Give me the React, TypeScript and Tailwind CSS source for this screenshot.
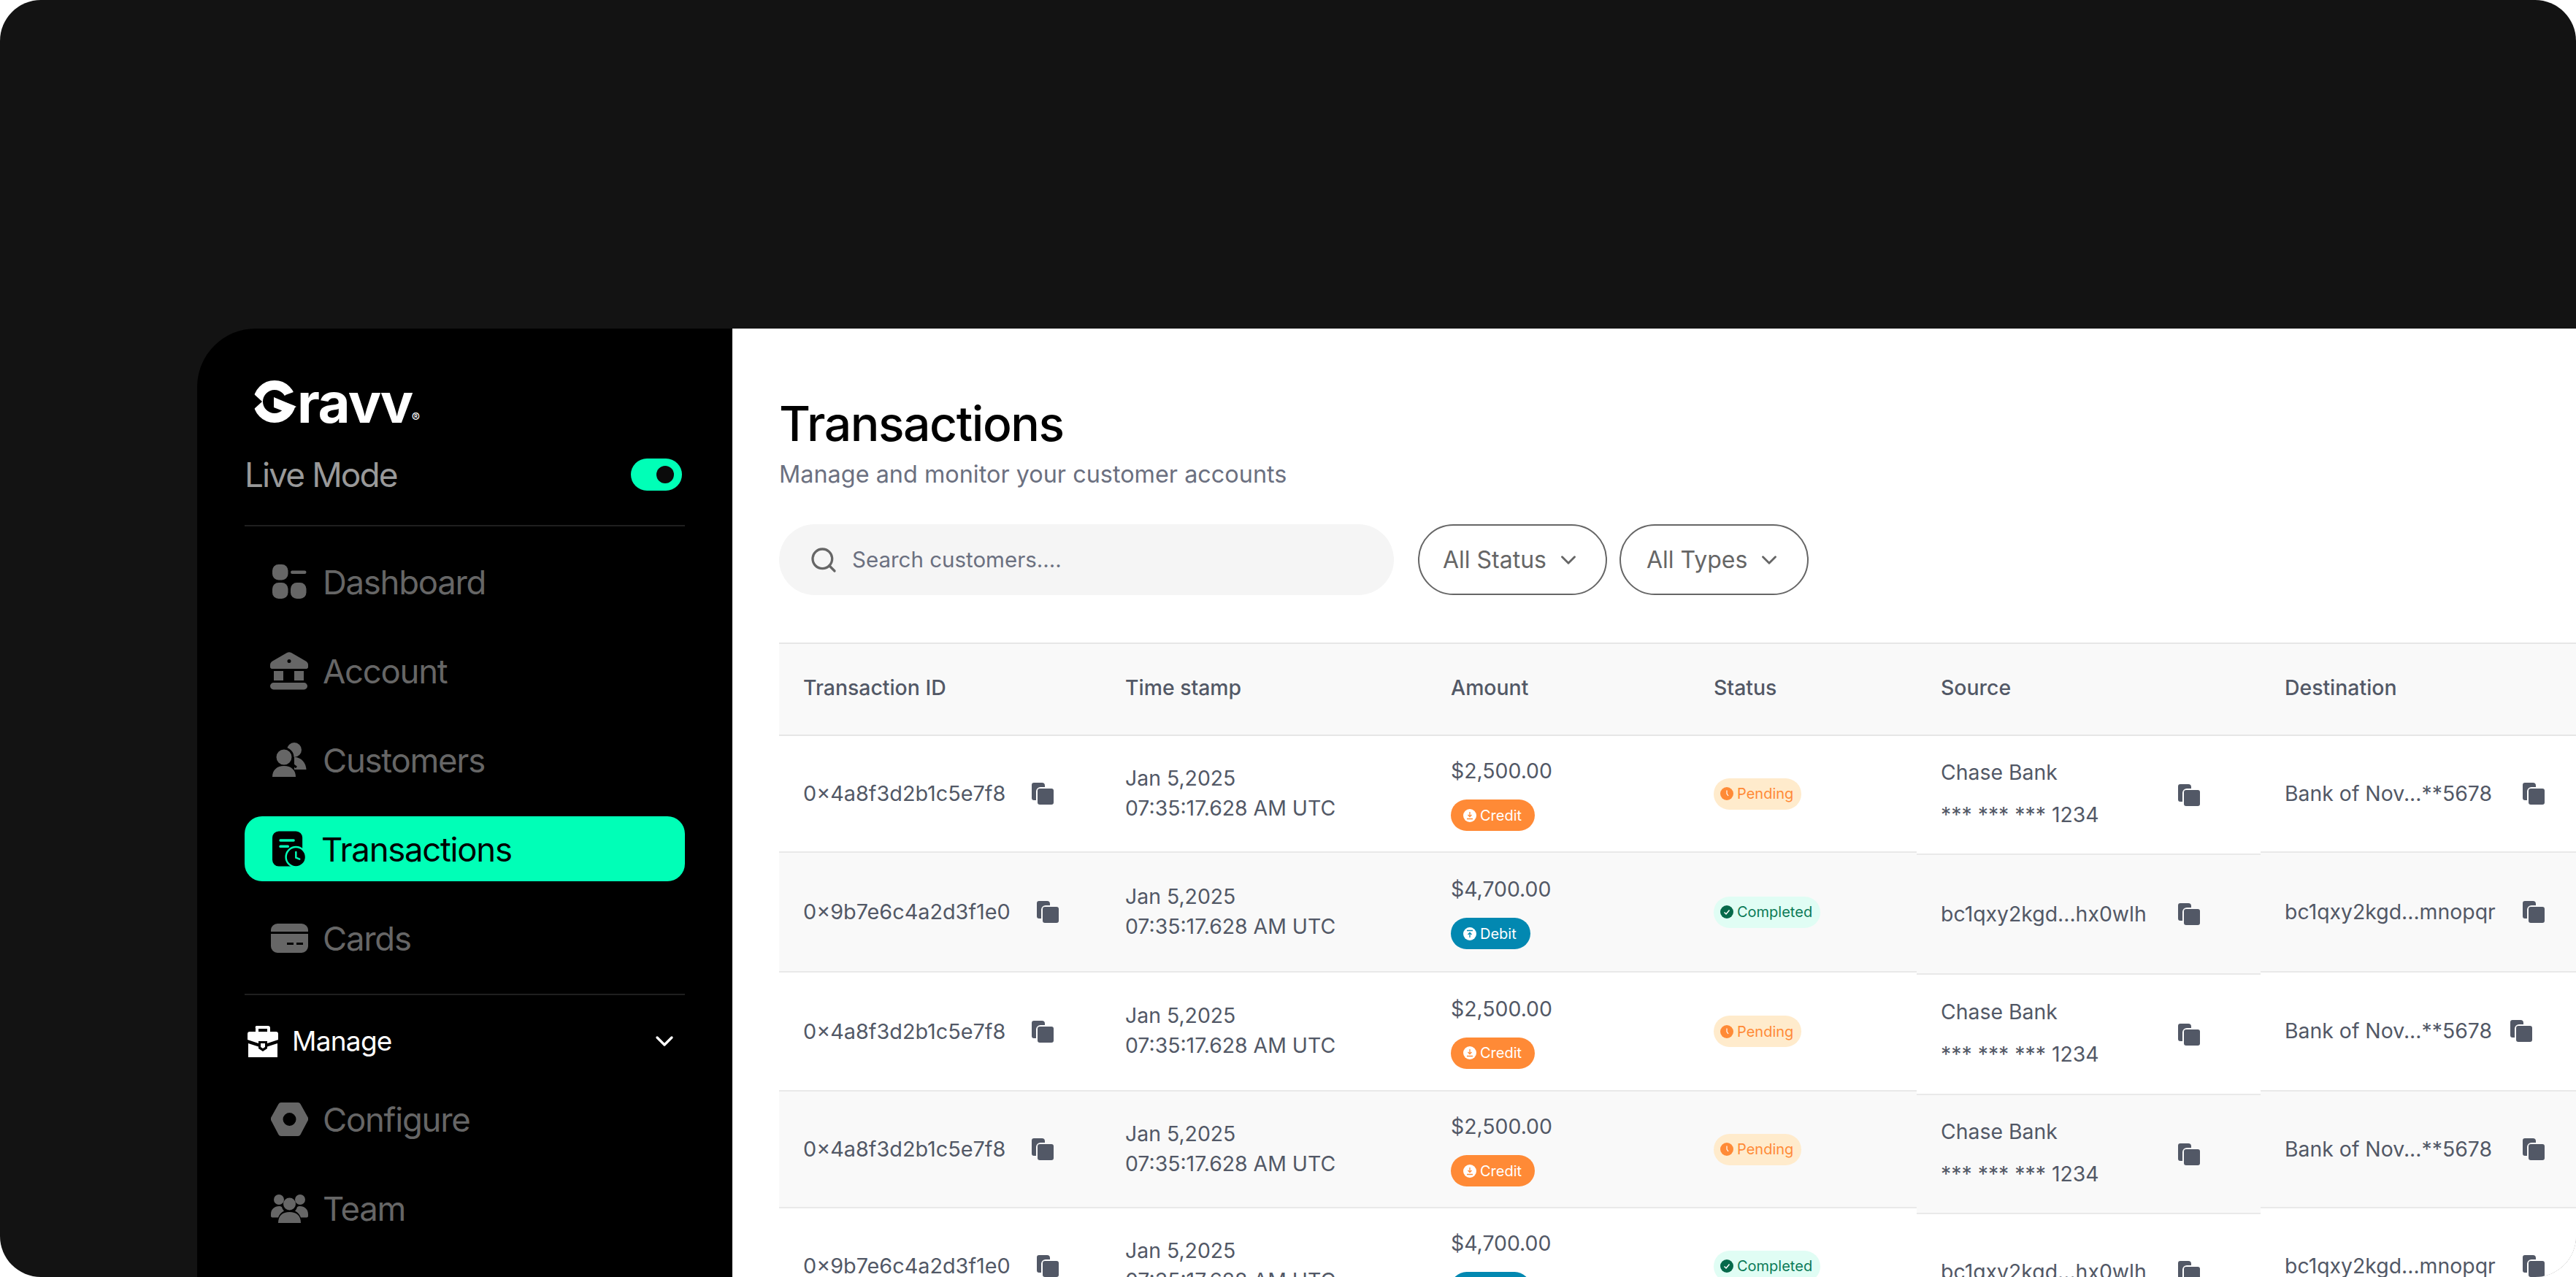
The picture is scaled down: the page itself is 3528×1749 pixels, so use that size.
import { ChevronDown, Search } from 'lucide-react';

const CopyIcon = () => (
  <svg viewBox="0 0 30 30" className="w-[30px] h-[30px] shrink-0 text-[#525866]" fill="currentColor">
    <path d="M3 0h11a4 4 0 0 1 4 4v2h-6a6 6 0 0 0-6 6v12H3a3 3 0 0 1-3-3V3a3 3 0 0 1 3-3z" />
    <rect x="8" y="8" width="22" height="22" rx="3" />
  </svg>
);

const DashboardIcon = () => (
  <svg viewBox="0 0 47 47" className="w-[47px] h-[47px]" fill="currentColor">
    <rect x="0" y="0" width="21.5" height="21.5" rx="8.5" />
    <rect x="25" y="8.5" width="21.5" height="4.5" rx="2.2" />
    <rect x="0" y="25" width="21.5" height="22" rx="8.5" />
    <rect x="25" y="25" width="21.5" height="22" rx="8.5" />
  </svg>
);

const AccountIcon = () => (
  <svg viewBox="0 0 52 52" className="w-[52px] h-[52px]" fill="currentColor">
    <path fillRule="evenodd" d="M23 1a6 6 0 0 1 6 0l19 11a7 7 0 0 1 4 7v1a2.500 2.500 0 0 1-2.500 3h-47A2.500 2.500 0 0 1 0 20v-1a7 7 0 0 1 4-7zM26 10a2.500 2.500 0 1 0 0 5 2.500 2.500 0 0 0 0-5z" />
    <rect x="5" y="26" width="13" height="13" />
    <rect x="33" y="26" width="13" height="13" />
    <rect x="0" y="42" width="51" height="9.500" rx="4.700" />
  </svg>
);

const CustomersIcon = () => (
  <svg viewBox="0 0 47 47" className="w-[47px] h-[47px]" fill="currentColor">
    <circle cx="30" cy="10" r="10" />
    <path d="M30 20c10 0 16 8 16.500 17H30z" />
    <circle cx="16" cy="20" r="12" stroke="#000" strokeWidth="3" />
    <path d="M0 47c0-9 6-15 16-15s16 6 16 15z" stroke="#000" strokeWidth="0" />
    <path d="M33 34l-4-3" stroke="#000" strokeWidth="3" />
  </svg>
);

const TransactionsIcon = () => (
  <svg viewBox="0 0 48 50" className="w-[47px] h-[50px]">
    <rect x="0" y="0" width="42" height="49" rx="9" fill="#000" />
    <rect x="9.500" y="11" width="22" height="3.500" rx="1.700" fill="#00ffb7" />
    <rect x="9.500" y="19.500" width="14" height="3.500" rx="1.700" fill="#00ffb7" />
    <circle cx="33" cy="36" r="14" fill="#000" stroke="#00ffb7" strokeWidth="2.500" />
    <path d="M33 29v8l5 2" fill="none" stroke="#00ffb7" strokeWidth="2.500" strokeLinecap="round" />
  </svg>
);

const CardsIcon = () => (
  <svg viewBox="0 0 51 40" className="w-[51px] h-[40px]" fill="currentColor">
    <path d="M9 0h33a9 9 0 0 1 9 9v2H0V9a9 9 0 0 1 9-9z" />
    <path fillRule="evenodd" d="M0 14h51v17a9 9 0 0 1-9 9H9a9 9 0 0 1-9-9zM22 26v3h9v-3zM35 26v3h9v-3z" />
  </svg>
);

const ManageIcon = () => (
  <svg viewBox="0 0 42 43" className="w-[42px] h-[43px]" fill="#fff">
    <path fillRule="evenodd" d="M13 0h15a3 3 0 0 1 3 3v5h8a3 3 0 0 1 3 3v8L27 24v-3H15v3L0 19v-8a3 3 0 0 1 3-3h8V3a2 2 0 0 1 2-3zM15 4v4h12V4z" />
    <path d="M1 24l14 4.500V31l6 4 6-4v-2.500L41 24v19H1z" />
    <path d="M18 24h6v5l-3 2-3-2z" />
  </svg>
);

const ConfigureIcon = () => (
  <svg viewBox="0 0 51 46" className="w-[51px] h-[46px]" fill="currentColor">
    <path fillRule="evenodd" d="M14 0h23a4 4 0 0 1 3.500 2l10 18a5 5 0 0 1 0 5l-10 19a4 4 0 0 1-3.500 2H14a4 4 0 0 1-3.500-2L.5 25a5 5 0 0 1 0-5l10-18A4 4 0 0 1 14 0zM25.500 14a9 9 0 1 0 0 18 9 9 0 0 0 0-18z" />
  </svg>
);

const TeamIcon = () => (
  <svg viewBox="0 0 51 40" className="w-[51px] h-[40px]" fill="currentColor">
    <circle cx="25.500" cy="14" r="8.500" />
    <path d="M10 40c0-10 6-15 15.500-15S41 30 41 40z" />
    <circle cx="11" cy="8" r="7" />
    <circle cx="40" cy="8" r="7" />
    <path d="M0 28c0-7 5-11 11-11 2 0 3 .5 4 1 .5 2 1.500 4 3 5.500-4 2-6.500 5-8 9H2a2 2 0 0 1-2-2z" />
    <path d="M51 28c0-7-5-11-11-11-2 0-3 .5-4 1-.5 2-1.500 4-3 5.500 4 2 6.500 5 8 9h8a2 2 0 0 0 2-2z" />
  </svg>
);

const navTop = [
  { label: 'Dashboard', icon: <DashboardIcon /> },
  { label: 'Account', icon: <AccountIcon /> },
  { label: 'Customers', icon: <CustomersIcon /> },
  { label: 'Transactions', icon: <TransactionsIcon />, active: true },
  { label: 'Cards', icon: <CardsIcon /> },
];

const navManage = [
  { label: 'Configure', icon: <ConfigureIcon /> },
  { label: 'Team', icon: <TeamIcon /> },
];

function NavItem({ label, icon, active }: { label: string; icon: React.ReactNode; active?: boolean }) {
  return (
    <div
      className={`flex items-center h-[89px] pl-[34px] rounded-[24px] text-[45.5px] tracking-[-0.028em] ${
        active ? 'bg-[#00ffb7] text-black' : 'text-[#666666]'
      }`}
    >
      <div className="w-[54px] flex justify-center items-center">{icon}</div>
      <span className={active ? 'ml-[17px] pt-[3px]' : 'ml-[19px] pt-[3px]'}>{label}</span>
    </div>
  );
}

function Sidebar() {
  return (
    <aside className="w-[733px] shrink-0 h-full bg-black rounded-tl-[80px] pl-[65px] pr-[65px] pt-[72px]">
      {/* Logo */}
      <div className="flex items-end h-[57px] pl-[12px] text-white">
        <svg viewBox="0 0 59 58" className="w-[59px] h-[58px] shrink-0">
          <circle cx="29" cy="29" r="22.500" fill="none" stroke="#fff" strokeWidth="13" />
          <path d="M-1 17L12 29-1 41z" fill="#000" />
          <path d="M44 20L60 14V36L38 28z" fill="#000" />
          <path d="M28 23L59 36 46 44 28 37z" fill="#fff" />
        </svg>
        <span className="font-bold text-[76px] leading-[57px] tracking-[-0.02em] -mb-[1px] ml-[1px]">ravv</span>
        <span className="text-[17px] leading-[14px] -ml-[1px]">®</span>
      </div>

      {/* Live mode */}
      <div className="flex items-center justify-between h-[44px] mt-[49px] pr-[4px]">
        <span className="text-[46px] tracking-[-0.042em] text-[#999999]">Live Mode</span>
        <div className="w-[70px] h-[44px] rounded-full bg-[#00ffb7] flex items-center justify-end pr-[11px]">
          <div className="w-[24px] h-[24px] rounded-full bg-[#0b0b0b]" />
        </div>
      </div>
      <div className="h-[2px] bg-[#1f1f1f] mt-[47px]" />

      <nav className="flex flex-col gap-[33px] mt-[31px]">
        {navTop.map((n) => (
          <NavItem key={n.label} {...n} />
        ))}
      </nav>
      <div className="h-[2px] bg-[#1f1f1f] mt-[32px]" />

      {/* Manage */}
      <div className="flex items-center h-[44px] mt-[41px] pl-[4px] pr-[8px] text-white">
        <ManageIcon />
        <span className="ml-[19px] text-[37px] tracking-[-0.02em]">Manage</span>
        <ChevronDown className="ml-auto w-[40px] h-[40px]" strokeWidth={2} />
      </div>
      <nav className="flex flex-col gap-[33px] mt-[40px]">
        {navManage.map((n) => (
          <NavItem key={n.label} {...n} />
        ))}
      </nav>
    </aside>
  );
}

const CreditBadge = () => (
  <span className="inline-flex items-center h-[43px] pl-[17px] pr-[18px] rounded-full bg-[#ff8a36] text-white text-[20px] gap-[5px]">
    <svg viewBox="0 0 18 18" className="w-[18px] h-[18px]">
      <circle cx="9" cy="9" r="9" fill="#fff" />
      <path d="M9 4v6M6.500 8L9 10.500 11.500 8M5 13.500h8" fill="none" stroke="#ff8a36" strokeWidth="1.300" />
    </svg>
    Credit
  </span>
);

const DebitBadge = () => (
  <span className="inline-flex items-center h-[43px] pl-[17px] pr-[19px] rounded-full bg-[#0288b1] text-white text-[20px] gap-[5px]">
    <svg viewBox="0 0 18 18" className="w-[18px] h-[18px]">
      <circle cx="9" cy="9" r="9" fill="#fff" />
      <path d="M9 14V8M6.500 10L9 7.500 11.500 10M5 4.500h8" fill="none" stroke="#0288b1" strokeWidth="1.300" />
    </svg>
    Debit
  </span>
);

const PendingPill = () => (
  <span className="inline-flex items-center h-[43px] pl-[9px] pr-[11px] rounded-full bg-[#ffebcc] text-[#ff8a36] text-[20px] gap-[5px]">
    <svg viewBox="0 0 18 18" className="w-[18px] h-[18px]">
      <circle cx="9" cy="9" r="9" fill="#ff8a36" />
      <path d="M9 4.500v4.500l2 3" fill="none" stroke="#fff" strokeWidth="1.200" />
    </svg>
    Pending
  </span>
);

const CompletedPill = () => (
  <span className="inline-flex items-center h-[43px] pl-[9px] pr-[11px] rounded-full bg-[#e0fdf4] text-[#0b7a57] text-[20px] gap-[5px]">
    <svg viewBox="0 0 18 18" className="w-[18px] h-[18px]">
      <circle cx="9" cy="9" r="9" fill="#06694a" />
      <path d="M5.500 9.500L8 12l4.500-5.500" fill="none" stroke="#fff" strokeWidth="1.500" />
    </svg>
    Completed
  </span>
);

type Row = {
  id: string;
  amount: string;
  debit: boolean;
  completed: boolean;
  bank: boolean;
  dest: string;
  destW: string;
};

const rows: Row[] = [
  { id: '0×4a8f3d2b1c5e7f8', amount: '$2,500.00', debit: false, completed: false, bank: true, dest: 'Bank of Nov...**5678', destW: 'w-[356px]' },
  { id: '0×9b7e6c4a2d3f1e0', amount: '$4,700.00', debit: true, completed: true, bank: false, dest: 'bc1qxy2kgd...mnopqr', destW: 'w-[356px]' },
  { id: '0×4a8f3d2b1c5e7f8', amount: '$2,500.00', debit: false, completed: false, bank: true, dest: 'Bank of Nov...**5678', destW: 'w-[339px]' },
  { id: '0×4a8f3d2b1c5e7f8', amount: '$2,500.00', debit: false, completed: false, bank: true, dest: 'Bank of Nov...**5678', destW: 'w-[356px]' },
  { id: '0×9b7e6c4a2d3f1e0', amount: '$4,700.00', debit: true, completed: true, bank: false, dest: 'bc1qxy2kgd...mnopqr', destW: 'w-[356px]' },
];

// the source column runs a few px taller than the others
const rowH = ['h-[160px]', 'h-[164px]', 'h-[163px]', 'h-[160px]', 'h-[160px]'];
const sourceRowH = ['h-[163px]', 'h-[164px]', 'h-[165px]', 'h-[163px]', 'h-[160px]'];

function Column({
  title,
  width,
  heights = rowH,
  render,
}: {
  title: string;
  width: string;
  heights?: string[];
  render: (r: Row) => React.ReactNode;
}) {
  return (
    <div className={`${width} shrink-0`}>
      <div className="h-[128px] flex items-center pl-[33px] pb-[3px] bg-[#f9f9f9] border-y-2 border-[#e6e6e6] font-medium text-[#525866]">
        {title}
      </div>
      {rows.map((r, i) => (
        <div
          key={i}
          className={`${heights[i]} flex items-center pl-[33px] border-b-2 border-[#e9e9e9] ${i % 2 === 1 ? 'bg-[#f9f9f9]' : 'bg-white'}`}
        >
          {render(r)}
        </div>
      ))}
    </div>
  );
}

function TransactionsTable() {
  return (
    <div className="flex mt-[65px] text-[28.4px] text-[#525866]">
      <Column
        title="Transaction ID"
        width="w-[441px]"
        render={(r) => (
          <div className="flex items-center gap-[36px] text-[28.8px]">
            <span>{r.id}</span>
            <CopyIcon />
          </div>
        )}
      />
      <Column
        title="Time stamp"
        width="w-[446px]"
        render={() => (
          <div className="leading-[41px] pb-[3px]">
            <div>Jan 5,2025</div>
            <div>07:35:17.628 AM UTC</div>
          </div>
        )}
      />
      <Column
        title="Amount"
        width="w-[360px]"
        render={(r) => (
          <div className="flex flex-col items-start">
            <span className="leading-[40px]">{r.amount}</span>
            <div className="mt-[19px] flex">{r.debit ? <DebitBadge /> : <CreditBadge />}</div>
          </div>
        )}
      />
      <Column
        title="Status"
        width="w-[311px]"
        render={(r) => (r.completed ? <CompletedPill /> : <PendingPill />)}
      />
      <Column
        title="Source"
        width="w-[471px]"
        heights={sourceRowH}
        render={(r) => (
          <div className="flex items-center justify-between w-[355px]">
            {r.bank ? (
              <div className="leading-[58px] pb-[3px]">
                <div>Chase Bank</div>
                <div>*** *** *** 1234</div>
              </div>
            ) : (
              <span>bc1qxy2kgd...hx0wlh</span>
            )}
            <CopyIcon />
          </div>
        )}
      />
      <Column
        title="Destination"
        width="w-[432px]"
        render={(r) => (
          <div className={`flex items-center justify-between ${r.destW}`}>
            <span>{r.dest}</span>
            <CopyIcon />
          </div>
        )}
      />
    </div>
  );
}

export default function App() {
  return (
    <div className="w-[3528px] h-[1749px] rounded-[56px] bg-[#131313] overflow-hidden pt-[450px] pl-[270px] font-[Inter,sans-serif]">
      <div className="flex h-full overflow-hidden">
        <Sidebar />
        <main className="flex-1 min-w-0 bg-white pt-[90px] pl-[64px] overflow-hidden">
          <h1 className="text-[66px] leading-[80px] tracking-[-0.022em] font-medium text-black">Transactions</h1>
          <p className="mt-[6px] text-[32.4px] leading-[48px] text-[#6b7080]">Manage and monitor your customer accounts</p>

          <div className="flex items-center mt-[44px]">
            <div className="w-[842px] h-[97px] rounded-full bg-[#f5f5f5] flex items-center pl-[41px] gap-[19px]">
              <Search className="w-[40px] h-[40px] text-[#666666]" strokeWidth={2} />
              <span className="text-[29.5px] text-[#6b7080]">Search customers....</span>
            </div>
            <button className="ml-[33px] w-[259px] h-[97px] rounded-full border-2 border-[#666666] flex items-center pl-[32px] gap-[13px] text-[32px] text-[#666666]">
              All Status
              <ChevronDown className="w-[34px] h-[34px]" strokeWidth={2} />
            </button>
            <button className="ml-[17px] w-[259px] h-[97px] rounded-full border-2 border-[#666666] flex items-center pl-[35px] gap-[13px] text-[32px] text-[#666666]">
              All Types
              <ChevronDown className="w-[34px] h-[34px]" strokeWidth={2} />
            </button>
          </div>

          <TransactionsTable />
        </main>
      </div>
    </div>
  );
}
